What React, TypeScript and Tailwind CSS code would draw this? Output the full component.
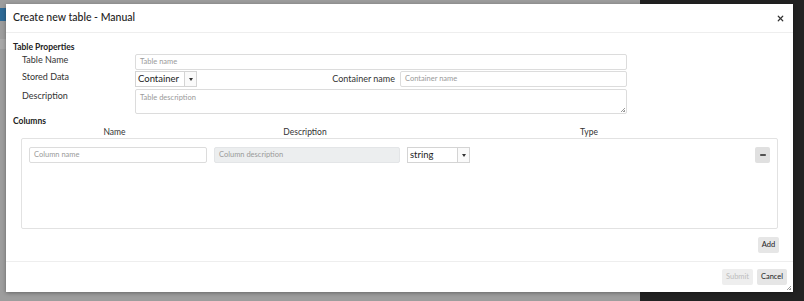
import { X, Minus } from 'lucide-react';

const font = { fontFamily: '"Lato", "Liberation Sans", sans-serif' };

function Select({ value, width }: { value: string; width: string }) {
  return (
    <div className={`flex h-[16px] ${width} border border-[#d4d4d4] bg-white text-[9.5px] text-[#222]`}>
      <div className="flex flex-1 items-center pl-[2px]">{value}</div>
      <div className="flex w-[12px] items-center justify-center border-l border-[#d4d4d4] bg-[#fafafa]">
        <span className="block h-0 w-0 border-x-[2.5px] border-t-[3px] border-x-transparent border-t-[#333]" />
      </div>
    </div>
  );
}

function Field({ placeholder, className, disabled }: { placeholder: string; className: string; disabled?: boolean }) {
  return (
    <div
      className={`flex items-center rounded-[2px] border px-[4px] text-[7.5px] text-[#9a9a9a] ${
        disabled ? 'border-[#e3e5e7] bg-[#eceeef]' : 'border-[#dcdcdc] bg-white'
      } ${className}`}
    >
      {placeholder}
    </div>
  );
}

export default function App() {
  return (
    <div className="relative h-[301px] w-[804px] overflow-hidden bg-[#222]" style={font}>
      {/* page behind the dialog */}
      <div className="absolute left-0 top-0 h-full w-[640px] bg-[#9d9d9d]">
        <div className="mt-[8px] h-[13px] w-[6px] bg-[#2e6a96]" />
        <div className="mt-[18px] h-[10px] w-[6px] bg-[#a8a8a8]" />
      </div>

      {/* dialog */}
      <div className="absolute left-[6px] top-[4px] flex h-[288px] w-[787px] flex-col bg-white shadow-[0_1px_4px_rgba(0,0,0,0.35)]">
        <div className="flex h-[29px] items-center justify-between border-b border-[#eeeeee] pl-[7px] pr-[8px]">
          <span className="text-[10.5px] font-medium text-[#222]">Create new table - Manual</span>
          <X size={9} strokeWidth={3.2} className="text-[#333]" />
        </div>

        <div className="flex flex-col px-[7px] pt-[9px]">
          <div className="text-[8.5px] font-bold leading-[10px] text-[#222]">Table Properties</div>

          <div className="mt-[2px] flex flex-col gap-[1px]">
            <div className="flex h-[16px] items-start">
              <span className="w-[122px] pl-[9px] text-[9px] leading-[11px] text-[#333]">Table Name</span>
              <Field placeholder="Table name" className="h-[16px] w-[492px]" />
            </div>
            <div className="flex h-[16px] items-start">
              <span className="w-[122px] pl-[9px] text-[9px] leading-[12px] text-[#333]">Stored Data</span>
              <Select value="Container" width="w-[62px]" />
              <div className="flex w-[203px] justify-end pr-[5px] text-[9px] leading-[16px] text-[#333]">Container name</div>
              <Field placeholder="Container name" className="h-[16px] w-[227px]" />
            </div>
            <div className="mt-[1px] flex items-start">
              <span className="w-[122px] pl-[9px] text-[9px] leading-[13px] text-[#333]">Description</span>
              <div className="relative h-[25px] w-[492px] rounded-[2px] border border-[#dcdcdc] px-[4px] pt-[2px] text-[7.5px] text-[#9a9a9a]">
                Table description
                <span className="absolute bottom-[1px] right-[1px] h-[4px] w-[4px] bg-[linear-gradient(135deg,transparent_50%,#999_50%,#999_60%,transparent_60%,transparent_75%,#999_75%)]" />
              </div>
            </div>
          </div>

          <div className="mt-[2px] text-[8.5px] font-bold leading-[10px] text-[#222]">Columns</div>

          <div className="flex h-[12px] items-center text-[8.5px] text-[#333]">
            <span className="w-[203px] text-center">Name</span>
            <span className="w-[178px] text-center">Description</span>
            <span className="ml-[180px] w-[30px] text-center">Type</span>
          </div>

          <div className="ml-[8px] h-[91px] w-[757px] rounded-[2px] border border-[#e2e2e2] px-[7px] pt-[8px]">
            <div className="flex items-center">
              <Field placeholder="Column name" className="h-[16px] w-[178px]" />
              <Field placeholder="Column description" className="ml-[7px] h-[16px] w-[186px]" disabled />
              <div className="ml-[7px]">
                <Select value="string" width="w-[63px]" />
              </div>
              <div className="ml-auto flex h-[16px] w-[15px] items-center justify-center rounded-[2px] bg-[#e0e0e0]">
                <Minus size={8} strokeWidth={4} className="text-[#222]" />
              </div>
            </div>
          </div>

          <div className="mt-[8px] flex justify-end pr-[7px]">
            <button className="h-[16px] w-[21px] rounded-[2px] bg-[#e6e6e6] text-[7.5px] text-[#222]">Add</button>
          </div>
        </div>

        <div className="mt-[8px] flex flex-1 items-start justify-end gap-[4px] border-t border-[#eeeeee] pr-[6px] pt-[7px]">
          <button className="h-[16px] w-[31px] rounded-[2px] bg-[#eeeeee] text-[7.5px] text-[#bdbdbd]">Submit</button>
          <button className="h-[16px] w-[30px] rounded-[2px] bg-[#e6e6e6] text-[7.5px] text-[#222]">Cancel</button>
        </div>
        <span className="absolute bottom-[2px] right-[2px] h-[4px] w-[4px] bg-[linear-gradient(135deg,transparent_50%,#999_50%,#999_60%,transparent_60%,transparent_75%,#999_75%)]" />
      </div>
    </div>
  );
}
